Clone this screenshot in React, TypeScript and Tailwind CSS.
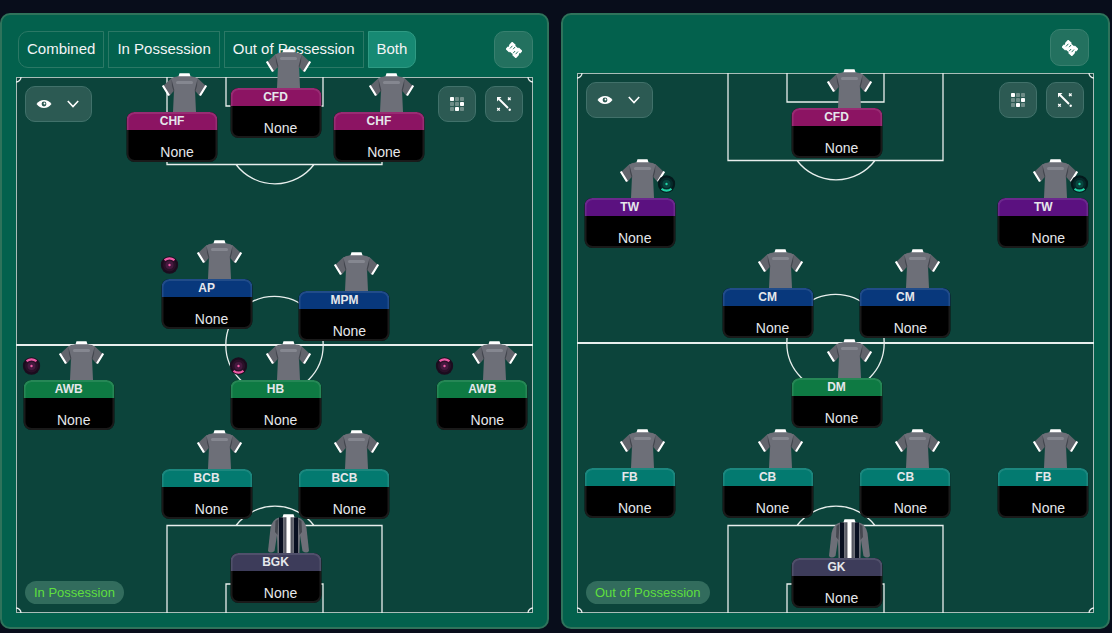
import { clsx } from "clsx";

type Badge = { side: "left" | "right"; tone: "pink" | "teal"; arc: "up" | "down" };

type Player = {
  id: string;
  role: string;
  band: string;
  x: number;
  y: number;
  keeper?: boolean;
  badge?: Badge;
};

const attack = "bg-[#8c1463]";
const winger = "bg-[#5b1180]";
const midfield = "bg-[#08387c]";
const holding = "bg-[#0e7a43]";
const defence = "bg-[#037a70]";
const keeper = "bg-[#3d3c5a]";

// x is a percentage of the pitch width, y is in pitch length units
const inPossession: Player[] = [
  { id: "stl", role: "CHF", band: attack, x: 30, y: 35 },
  { id: "stc", role: "CFD", band: attack, x: 50, y: 11 },
  { id: "str", role: "CHF", band: attack, x: 70, y: 35 },
  { id: "aml", role: "AP", band: midfield, x: 36.67, y: 202, badge: { side: "left", tone: "pink", arc: "up" } },
  { id: "amr", role: "MPM", band: midfield, x: 63.33, y: 214 },
  { id: "wbl", role: "AWB", band: holding, x: 10, y: 303, badge: { side: "left", tone: "pink", arc: "up" } },
  { id: "dm", role: "HB", band: holding, x: 50, y: 303, badge: { side: "left", tone: "pink", arc: "down" } },
  { id: "wbr", role: "AWB", band: holding, x: 90, y: 303, badge: { side: "left", tone: "pink", arc: "up" } },
  { id: "dcl", role: "BCB", band: defence, x: 36.67, y: 392 },
  { id: "dcr", role: "BCB", band: defence, x: 63.33, y: 392 },
  { id: "gk", role: "BGK", band: keeper, x: 50, y: 476, keeper: true },
];

const outOfPossession: Player[] = [
  { id: "stc", role: "CFD", band: attack, x: 50, y: 35 },
  { id: "aml", role: "TW", band: winger, x: 10, y: 125, badge: { side: "right", tone: "teal", arc: "down" } },
  { id: "amr", role: "TW", band: winger, x: 90, y: 125, badge: { side: "right", tone: "teal", arc: "down" } },
  { id: "mcl", role: "CM", band: midfield, x: 36.67, y: 215 },
  { id: "mcr", role: "CM", band: midfield, x: 63.33, y: 215 },
  { id: "dm", role: "DM", band: holding, x: 50, y: 305 },
  { id: "dl", role: "FB", band: defence, x: 10, y: 395 },
  { id: "dcl", role: "CB", band: defence, x: 36.67, y: 395 },
  { id: "dcr", role: "CB", band: defence, x: 63.33, y: 395 },
  { id: "dr", role: "FB", band: defence, x: 90, y: 395 },
  { id: "gk", role: "GK", band: keeper, x: 50, y: 485, keeper: true },
];

const tabs = ["Combined", "In Possession", "Out of Possession", "Both"];

const Shirt = () => (
  <svg viewBox="0 0 46 39" className="h-[39px] w-[46px]" aria-hidden="true">
    <path d="M14 3.5 L9 6 L1 13.5 L8 23 L13 17Z" fill="#62646c" />
    <path d="M32 3.5 L37 6 L45 13.5 L38 23 L33 17Z" fill="#62646c" />
    <path d="M9.5 5.5 L17 3 H29 L36.5 5.5 L33.5 17 L34.5 39 H11.5 L12.5 17Z" fill="#6d6f78" />
    <path d="M10 6 L12.8 17 L12.5 20 L10.5 13Z M36 6 L33.2 17 L33.5 20 L35.5 13Z" fill="#44474f" />
    <path d="M1.3 12.5 L7.5 22.5 M44.7 12.5 L38.5 22.5" stroke="#fff" strokeWidth="2.2" />
    <path d="M18 0.3 H28 L29 3.3 H17Z" fill="#fff" />
    <rect x="14.5" y="8" width="17" height="3" rx="1.5" fill="#858790" />
  </svg>
);

const KeeperShirt = () => (
  <svg viewBox="0 0 46 39" className="h-[39px] w-[46px]" aria-hidden="true">
    <path d="M13.5 3.5 Q7 5 5 14 L2.5 37 Q5 40 9 37 L12 18Z" fill="#6d6f78" />
    <path d="M32.5 3.5 Q39 5 41 14 L43.5 37 Q41 40 37 37 L34 18Z" fill="#6d6f78" />
    <path d="M11 5 L17 3 H29 L35 5 L34 39 H12Z" fill="#6d6f78" />
    <path d="M10 7 L13 5 L12 21 L9.5 18Z M36 7 L33 5 L34 21 L36.5 18Z" fill="#44474f" />
    <path d="M13.5 3.5 h4 V39 h-4Z M28.5 3.5 h4 V39 h-4Z" fill="#080f20" />
    <path d="M19 3 h2 V39 h-2Z M25 3 h2 V39 h-2Z" fill="#565862" />
    <path d="M21 2 h4 V39 h-4Z M18 0.3 H28 L29 3.3 H17Z" fill="#fff" />
  </svg>
);

const MovementBadge = ({ side, tone, arc }: Badge) => {
  const pink = tone === "pink";
  const color = pink ? "#ee5ba6" : "#22d3a5";
  return (
    <svg
      viewBox="0 0 18 18"
      aria-hidden="true"
      className={clsx("absolute -top-[23px] z-10 size-[18px]", side === "left" ? "-left-px" : "right-0")}
    >
      <circle cx="9" cy="9" r="8.7" fill={pink ? "#1b0c1e" : "#04191c"} />
      <circle cx="9" cy="9" r="6.5" fill={pink ? "#2a1129" : "#052a2a"} />
      <circle cx="9" cy="9" r="4" fill={pink ? "#45193f" : "#08463f"} />
      <circle cx="9" cy="9" r="1.2" fill={color} />
      <path
        d={arc === "up" ? "M4 4.2 Q9 0.6 14 4.2" : "M4 13.8 Q9 17.4 14 13.8"}
        fill="none"
        stroke={color}
        strokeWidth="2.2"
      />
    </svg>
  );
};

const PlayerCard = ({ player, length }: { player: Player; length: number }) => (
  <div
    className="absolute ml-px w-[91px] -translate-x-1/2"
    style={{ left: `${player.x}%`, top: `${(player.y / length) * 100}%` }}
  >
    <div className="absolute bottom-full left-[35px]">
      {player.keeper ? <KeeperShirt /> : <Shirt />}
    </div>
    {player.badge && <MovementBadge {...player.badge} />}
    <button
      type="button"
      className="relative block h-[50px] w-full overflow-hidden rounded-lg bg-black text-center after:absolute after:inset-0 after:rounded-lg after:border-2 after:border-white/10"
    >
      <span className={clsx("block h-[18px] text-xs leading-[18px] font-bold text-gray-200", player.band)}>
        {player.role}
      </span>
      <span className="block pt-3 pl-2.5 text-sm leading-5 text-gray-200">None</span>
    </button>
  </div>
);

const PitchLines = ({ length }: { length: number }) => (
  <svg
    viewBox={`0 0 517 ${length}`}
    preserveAspectRatio="none"
    className="absolute inset-0 size-full"
    fill="none"
    stroke="#e8efed"
    strokeWidth="1.3"
    aria-hidden="true"
  >
    <rect x="0.5" y="0.5" width="516" height={length - 1} stroke="#a9bdb8" strokeWidth="1" />
    <path d={`M0 ${length / 2} H517`} strokeWidth="2" />
    <circle cx="258.5" cy={length / 2} r="48.7" />
    <path d="M151 0 V87.5 H366 V0 M210 0 V29 H307 V0 M220 87.5 A49 49 0 0 0 298 87.5" />
    <path
      d={`M151 ${length} v-87.5 H366 v87.5 M210 ${length} v-29 H307 v29 M220 ${length - 87.5} a49 49 0 0 1 78 0`}
    />
    <path d={`M0 5 A5 5 0 0 0 5 0 M512 0 A5 5 0 0 0 517 5 M0 ${length - 5} a5 5 0 0 1 5 5 M512 ${length} a5 5 0 0 1 5 -5`} />
  </svg>
);

const ClearIcon = () => (
  <svg viewBox="0 0 16 16" className="size-4" aria-hidden="true">
    <g transform="rotate(42 8 8)">
      <path d="M1 3 H6 V4 H10 V3 H15 V6.5 H14.3 V8 H15 V13 H10 V12 H6 V13 H1 V9.5 H1.7 V8 H1Z" fill="#fff" />
      <path d="M4 6 V9.5 M6.8 5 V8 M9.5 8 V11 M12 6.5 V10" fill="none" stroke="#23715f" strokeWidth="0.9" />
    </g>
  </svg>
);

const EyeIcon = () => (
  <svg viewBox="0 0 16 10" className="h-2.5 w-4" aria-hidden="true">
    <path d="M0.5 5 Q3.5 1 8 1 T15.5 5 Q12.5 9 8 9 T0.5 5Z" fill="#fff" />
    <circle cx="8" cy="5" r="2.4" fill="#2c5a53" />
    <circle cx="8.5" cy="4.5" r="0.9" fill="#fff" />
  </svg>
);

const ChevronIcon = () => (
  <svg viewBox="0 0 12 8" className="h-2 w-3" fill="none" stroke="#fff" strokeWidth="1.6" aria-hidden="true">
    <path d="M0.8 1 L6 6.5 L11.2 1" />
  </svg>
);

const GridIcon = () => (
  <svg viewBox="0 0 14 14" className="size-3.5" aria-hidden="true">
    {[0, 1, 2, 3, 4, 5, 6, 7, 8].map((cell) => (
      <rect
        key={cell}
        x={(cell % 3) * 5}
        y={Math.floor(cell / 3) * 5}
        width="4"
        height="4"
        rx="0.8"
        fill={[0, 5, 7].includes(cell) ? "#fff" : "#6f8d88"}
      />
    ))}
  </svg>
);

const ArrowIcon = () => (
  <svg viewBox="0 0 16 16" className="size-4" fill="none" stroke="#fff" aria-hidden="true">
    <path d="M1 1 H5.5 L1 5.5Z" fill="#fff" stroke="none" />
    <path d="M3 3 L12 12" strokeWidth="1.9" />
    <path d="M12 1.5 l2.6 2.6 M14.6 1.5 l-2.6 2.6 M1.2 12 l2.6 2.6 M3.8 12 l-2.6 2.6" strokeWidth="1.3" />
    <circle cx="13.7" cy="13.7" r="1.2" fill="#fff" stroke="none" />
  </svg>
);

const headerButton =
  "flex h-[37px] w-[39px] items-center justify-center rounded-[10px] border border-[#38806f] bg-[#23715f]";
const pitchButton =
  "flex h-9 items-center justify-center rounded-[10px] border border-[#41716a] bg-[#2c5a53]";

const Pitch = ({ label, players, length }: { label: string; players: Player[]; length: number }) => (
  <div className="relative flex grow flex-col justify-between bg-[#0c443b] py-[9px] pr-2.5 pl-[9px]">
    <PitchLines length={length} />
    <div className="relative flex justify-between">
      <button type="button" aria-label="Display options" className={clsx(pitchButton, "w-[67px] gap-[15px] pr-0.5")}>
        <EyeIcon />
        <ChevronIcon />
      </button>
      <div className="flex gap-[9px]">
        <button type="button" aria-label="Positions" className={clsx(pitchButton, "w-[38px]")}>
          <GridIcon />
        </button>
        <button type="button" aria-label="Movement" className={clsx(pitchButton, "w-[38px]")}>
          <ArrowIcon />
        </button>
      </div>
    </div>
    <span className="relative self-start rounded-full bg-[#326c5d] px-[9px] text-[13px] leading-[23px] text-[#5fdf3e]">
      {label}
    </span>
    {players.map((player) => (
      <PlayerCard key={player.id} player={player} length={length} />
    ))}
  </div>
);

const panel =
  "flex min-w-0 flex-1 flex-col rounded-[10px] border-2 border-[#2f735b] bg-[#03614d] px-3.5 pb-3.5";

export default function App() {
  return (
    <main className="flex min-h-screen gap-3 bg-[#080d1b] pt-[13px] pr-0.5 pb-1 font-['Liberation_Sans',sans-serif]">
      <section className={clsx(panel, "gap-[9px] pt-4")}>
        <div className="flex items-center justify-between pl-0.5">
          <div className="flex gap-1">
            {tabs.map((tab) => (
              <button
                key={tab}
                type="button"
                className={clsx(
                  "h-[37px] border px-2 text-[15px] whitespace-nowrap text-gray-100 first:rounded-l-[10px] last:rounded-r-[10px]",
                  tab === "Both" ? "border-[#2f9a83] bg-[#178973]" : "border-[#2b7865]"
                )}
              >
                {tab}
              </button>
            ))}
          </div>
          <button type="button" aria-label="Clear in possession" className={headerButton}>
            <ClearIcon />
          </button>
        </div>
        <Pitch label="In Possession" players={inPossession} length={536} />
      </section>

      <section className={clsx(panel, "gap-[7px] pt-3.5")}>
        <div className="flex justify-end pr-[5px]">
          <button type="button" aria-label="Clear out of possession" className={headerButton}>
            <ClearIcon />
          </button>
        </div>
        <Pitch label="Out of Possession" players={outOfPossession} length={540} />
      </section>
    </main>
  );
}
